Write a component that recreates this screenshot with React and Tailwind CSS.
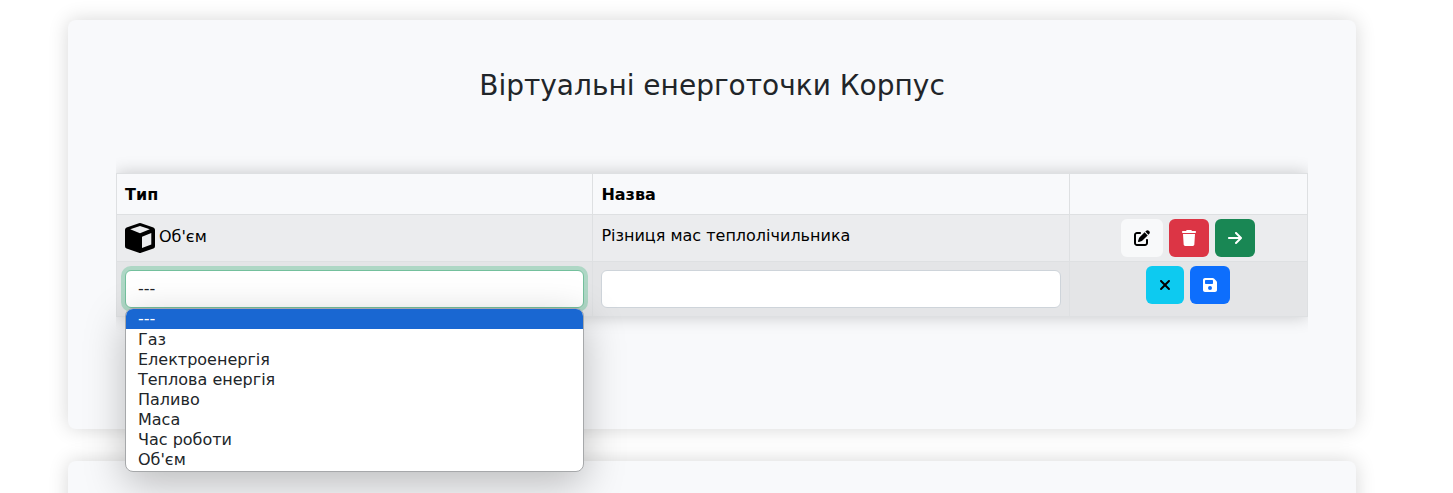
import { useState } from "react";
import {
  FaArrowRight,
  FaFloppyDisk,
  FaPenToSquare,
  FaTrash,
  FaXmark,
} from "react-icons/fa6";

const TYPES = [
  "---",
  "Газ",
  "Електроенергія",
  "Теплова енергія",
  "Паливо",
  "Маса",
  "Час роботи",
  "Об'єм",
];

function CubeIcon({ className }) {
  return (
    <svg viewBox="0 0 30 30" fill="currentColor" fillRule="evenodd" aria-hidden="true" className={className}>
      <path d="M13.9 .3Q15 -.1 16.1 .3L28.4 4.4Q30 5 30 6.7V23.3Q30 25 28.4 25.6L16.1 29.7Q15 30.1 13.9 29.7L1.6 25.6Q0 25 0 23.3V6.7Q0 5 1.6 4.4ZM15 3L5.2 6.3L15 10.2L24.8 6.3ZM17 13.8V25L26.3 21.6V10.1Z" />
    </svg>
  );
}

function IconButton({ label, className, children }) {
  return (
    <button
      type="button"
      aria-label={label}
      className={`flex h-[38px] items-center justify-center rounded-md px-[13px] ${className}`}
    >
      {children}
    </button>
  );
}

function TypeSelect() {
  const [value, setValue] = useState("---");
  return (
    <div className="relative">
      <select
        aria-label="Тип"
        value={value}
        onChange={(e) => setValue(e.target.value)}
        className="block h-[38px] w-full appearance-none rounded-md border border-[#74c09d] bg-white px-3 text-[#212529] shadow-[0_0_0_4px_#aed7c5] outline-none"
      >
        {TYPES.map((t) => (
          <option key={t}>{t}</option>
        ))}
      </select>
      <ul
        role="listbox"
        aria-label="Тип"
        className="absolute inset-x-0 top-full z-10 overflow-hidden rounded-lg border border-[#a6a8aa] bg-white pb-px text-[#212529] shadow-[0_12px_40px_rgba(0,0,0,0.25)]"
      >
        {TYPES.map((t) => (
          <li
            key={t}
            role="option"
            aria-selected={t === value}
            onClick={() => setValue(t)}
            className="px-3 leading-5 first:mb-px aria-selected:bg-[#1967d2] aria-selected:text-white"
          >
            {t}
          </li>
        ))}
      </ul>
    </div>
  );
}

export default function App() {
  return (
    <main
      className="flex h-screen flex-col gap-8 overflow-hidden bg-white pt-5 pr-[97px] pl-[68px] text-base text-[#212529]"
      style={{ fontFamily: 'Verdana, "DejaVu Sans", sans-serif' }}
    >
      <section className="relative z-10 shrink-0 rounded-lg bg-[#f8f9fb] px-12 pt-12 pb-28 shadow-[0_0_20px_rgba(0,0,0,0.16)]">
        <h1 className="text-center text-[28px] leading-9">Віртуальні енерготочки Корпус</h1>
        <div className="relative mt-[69px]">
          <div className="absolute inset-0 overflow-x-clip">
            <div className="h-full shadow-[0_0_16px_rgba(0,0,0,0.2)]" />
          </div>
          <table className="relative w-full table-fixed border-collapse bg-[#f8f9fb] text-black">
            <colgroup>
              <col className="w-2/5" />
              <col className="w-2/5" />
              <col className="w-1/5" />
            </colgroup>
            <thead>
              <tr>
                <th className="border border-[#dee0e2] px-2 pt-[9px] pb-[7px] text-left font-bold">Тип</th>
                <th className="border border-[#dee0e2] px-2 pt-[9px] pb-[7px] text-left font-bold">Назва</th>
                <td className="border border-[#dee0e2] p-2" />
              </tr>
            </thead>
            <tbody className="align-top">
              <tr className="bg-[#ebecee]">
                <td className="border border-[#dee0e2] p-2">
                  <span className="flex gap-1">
                    <CubeIcon className="size-[30px]" />
                    <span className="pt-0.5">Об'єм</span>
                  </span>
                </td>
                <td className="border border-[#dee0e2] px-2 pt-[9px] pb-[7px]">Різниця мас теплолічильника</td>
                <td className="border border-[#dee0e2] p-1">
                  <div className="flex justify-center gap-1.5">
                    <IconButton label="Редагувати" className="bg-[#f8f9fa] text-black">
                      <FaPenToSquare className="size-4" />
                    </IconButton>
                    <IconButton label="Видалити" className="bg-[#dc3545] text-white">
                      <FaTrash className="h-4 w-3.5" />
                    </IconButton>
                    <IconButton label="Перейти" className="bg-[#198754] text-white">
                      <FaArrowRight className="h-4 w-3.5" />
                    </IconButton>
                  </div>
                </td>
              </tr>
              <tr className="bg-[#e4e5e7]">
                <td className="border border-[#dee0e2] p-2">
                  <TypeSelect />
                </td>
                <td className="border border-[#dee0e2] p-2">
                  <input
                    type="text"
                    aria-label="Назва"
                    className="block h-[38px] w-full rounded-md border border-[#ced4da] bg-white px-3 outline-none"
                  />
                </td>
                <td className="border border-[#dee0e2] p-1">
                  <div className="flex justify-center gap-1.5">
                    <IconButton label="Скасувати" className="bg-[#0dcaf0] text-black">
                      <FaXmark className="h-4 w-3" />
                    </IconButton>
                    <IconButton label="Зберегти" className="bg-[#0d6efd] text-white">
                      <FaFloppyDisk className="h-4 w-3.5" />
                    </IconButton>
                  </div>
                </td>
              </tr>
            </tbody>
          </table>
        </div>
      </section>
      <section className="min-h-40 shrink-0 rounded-lg bg-[#f8f9fb] shadow-[0_0_20px_rgba(0,0,0,0.16)]" />
    </main>
  );
}
